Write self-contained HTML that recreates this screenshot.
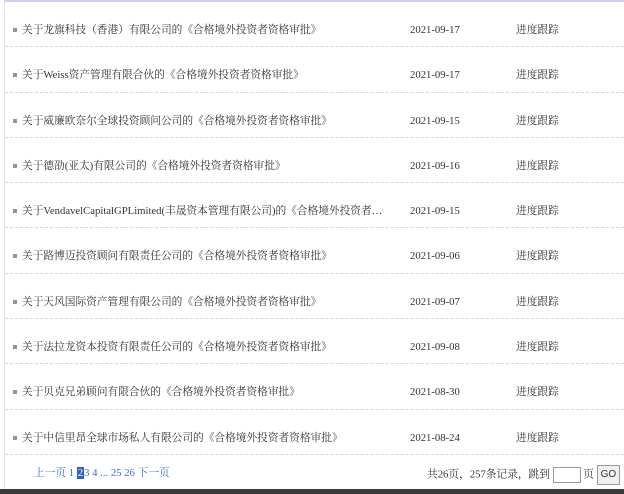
<!DOCTYPE html>
<html><head><meta charset="utf-8"><style>
body{margin:0;width:624px;height:494px;overflow:hidden;background:#fff;font-family:"Liberation Serif","Noto Serif CJK SC",serif;font-size:10.7px;color:#333;position:relative}
.wrap{position:absolute;left:4px;top:0;width:620px;height:489px;border-top:2px solid #cdcdf7;border-left:1px solid #e4e4e4;box-sizing:border-box}
.row{position:relative;height:45.3px;border-bottom:1px dashed #d6d6d6;box-sizing:border-box}
.row span{position:absolute;top:21px;line-height:14px;white-space:nowrap}
.t{left:17px}
.t:before{content:"";position:absolute;left:-9px;top:5px;width:4px;height:4px;background:#8a96a8}
.d{left:405px}
.s{left:511px}
.pg{position:absolute;top:466px;left:34px;color:#3b6ecb;line-height:14px}
.cur{background:#2c62c9;color:#fff;padding:0 1px}
.right{position:absolute;top:465px;left:427px;line-height:16px;white-space:nowrap}
.in{display:inline-block;width:26px;height:14px;border:1px solid #999;vertical-align:middle}
.go{display:inline-block;border:1px solid #999;background:#f0f0f0;font-family:"Liberation Sans",sans-serif;font-size:10px;padding:1px 3px;vertical-align:middle}
.bar{position:absolute;left:0;top:489px;width:624px;height:5px;background:#3a3a3a}
</style></head><body>
<div class="wrap">
<div class="row"><span class="t">关于龙旗科技（香港）有限公司的《合格境外投资者资格审批》</span><span class="d">2021-09-17</span><span class="s">进度跟踪</span></div>
<div class="row"><span class="t">关于Weiss资产管理有限合伙的《合格境外投资者资格审批》</span><span class="d">2021-09-17</span><span class="s">进度跟踪</span></div>
<div class="row"><span class="t">关于威廉欧奈尔全球投资顾问公司的《合格境外投资者资格审批》</span><span class="d">2021-09-15</span><span class="s">进度跟踪</span></div>
<div class="row"><span class="t">关于德劭(亚太)有限公司的《合格境外投资者资格审批》</span><span class="d">2021-09-16</span><span class="s">进度跟踪</span></div>
<div class="row"><span class="t">关于VendavelCapitalGPLimited(丰晟资本管理有限公司)的《合格境外投资者…</span><span class="d">2021-09-15</span><span class="s">进度跟踪</span></div>
<div class="row"><span class="t">关于路博迈投资顾问有限责任公司的《合格境外投资者资格审批》</span><span class="d">2021-09-06</span><span class="s">进度跟踪</span></div>
<div class="row"><span class="t">关于天风国际资产管理有限公司的《合格境外投资者资格审批》</span><span class="d">2021-09-07</span><span class="s">进度跟踪</span></div>
<div class="row"><span class="t">关于法拉龙资本投资有限责任公司的《合格境外投资者资格审批》</span><span class="d">2021-09-08</span><span class="s">进度跟踪</span></div>
<div class="row"><span class="t">关于贝克兄弟顾问有限合伙的《合格境外投资者资格审批》</span><span class="d">2021-08-30</span><span class="s">进度跟踪</span></div>
<div class="row"><span class="t">关于中信里昂全球市场私人有限公司的《合格境外投资者资格审批》</span><span class="d">2021-08-24</span><span class="s">进度跟踪</span></div>
</div>
<div class="pg">上一页 1 <span class="cur">2</span>3 4 ... 25 26 下一页</div>
<div class="right">共26页，257条记录，跳到 <span class="in"></span> 页 <span class="go">GO</span></div>
<div class="bar"></div>
</body></html>
